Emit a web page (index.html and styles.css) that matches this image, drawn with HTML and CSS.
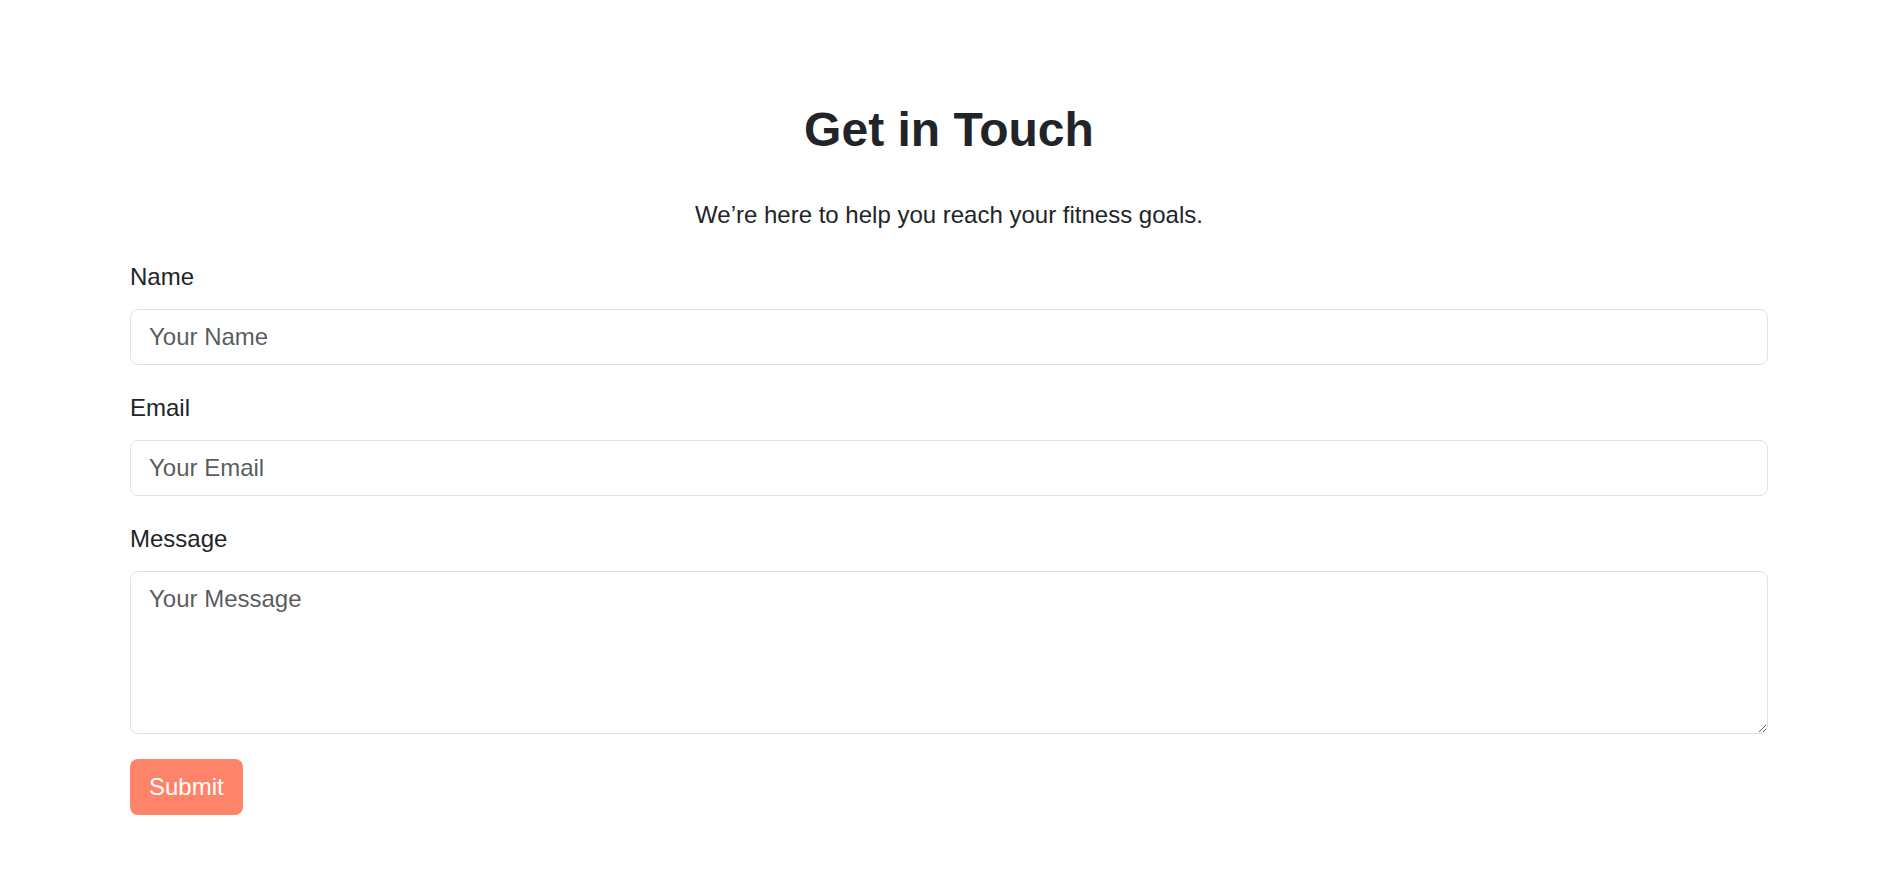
FILE: index.html
```html
<!DOCTYPE html>
<html lang="en">
<head>
<meta charset="utf-8">
<title>Get in Touch</title>
<link rel="stylesheet" href="styles.css">
</head>
<body>
<main class="contact">
  <h1 class="contact-title">Get in Touch</h1>
  <p class="contact-lead">We’re here to help you reach your fitness goals.</p>
  <form class="contact-form">
    <div class="field">
      <label class="field-label" for="name">Name</label>
      <input class="field-input" id="name" type="text" placeholder="Your Name">
    </div>
    <div class="field">
      <label class="field-label" for="email">Email</label>
      <input class="field-input" id="email" type="email" placeholder="Your Email">
    </div>
    <div class="field">
      <label class="field-label" for="message">Message</label>
      <textarea class="field-input field-textarea" id="message" placeholder="Your Message"></textarea>
    </div>
    <button class="submit-btn" type="submit">Submit</button>
  </form>
</main>
</body>
</html>
```

FILE: styles.css
```css
* {
  box-sizing: border-box;
}

html, body {
  margin: 0;
  padding: 0;
  background: #ffffff;
}

body {
  font-family: "Liberation Sans", Arial, sans-serif;
  color: #212529;
}

.contact {
  padding: 101px 126px 40px 130px;
}

.contact-title {
  margin: 0;
  font-size: 48px;
  line-height: 57.6px;
  font-weight: 700;
  text-align: center;
  color: #212529;
}

.contact-lead {
  margin: 39px 0 0;
  font-size: 24px;
  line-height: 34px;
  text-align: center;
  color: #212529;
}

.contact-form {
  display: flex;
  flex-direction: column;
  margin-top: 28px;
}

.field {
  display: flex;
  flex-direction: column;
  margin-bottom: 26px;
}

.field:last-of-type {
  margin-bottom: 25px;
}

.field-label {
  font-size: 24px;
  line-height: 34px;
  margin-bottom: 15px;
  color: #212529;
}

.field-input {
  display: block;
  width: 100%;
  height: 56px;
  padding: 0 18px;
  font-family: "Liberation Sans", Arial, sans-serif;
  font-size: 24px;
  color: #212529;
  background: #ffffff;
  border: 1px solid #dee2e6;
  border-radius: 8px;
  outline: none;
}

.field-input::placeholder {
  color: rgba(33, 37, 41, 0.75);
  opacity: 1;
}

.field-textarea {
  height: 163px;
  padding: 9px 18px;
  line-height: 1.5;
  resize: vertical;
}

.submit-btn {
  align-self: flex-start;
  height: 56px;
  padding: 0 19px;
  font-family: "Liberation Sans", Arial, sans-serif;
  font-size: 24px;
  color: #ffffff;
  background: #fd8469;
  border: none;
  border-radius: 8px;
  cursor: pointer;
}
```
